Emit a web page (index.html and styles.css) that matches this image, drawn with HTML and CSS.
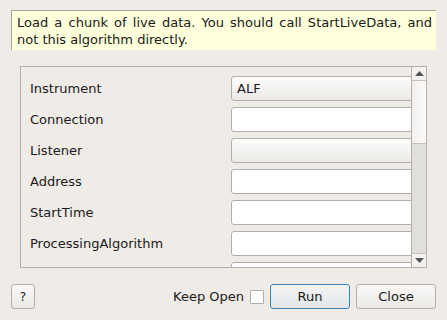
FILE: index.html
```html
<!DOCTYPE html>
<html lang="en">
<head>
  <meta charset="UTF-8">
  <title>StartLiveData</title>
  <link rel="stylesheet" href="styles.css">
</head>
<body>

  <div class="desc">Load a chunk of live data. You should call StartLiveData, and not this algorithm directly.</div>

  <div class="scroll">
    <div class="props">
      <div class="row"><span class="lbl">Instrument</span><div class="combo">ALF</div></div>
      <div class="row"><span class="lbl">Connection</span><div class="field"></div></div>
      <div class="row"><span class="lbl">Listener</span><div class="combo"></div></div>
      <div class="row"><span class="lbl">Address</span><div class="field"></div></div>
      <div class="row"><span class="lbl">StartTime</span><div class="field"></div></div>
      <div class="row"><span class="lbl">ProcessingAlgorithm</span><div class="field"></div></div>
      <div class="row"><span class="lbl"></span><div class="field"></div></div>
    </div>
    <div class="sbar">
      <div class="arrow up"><svg width="9" height="5" viewBox="0 0 9 5"><path d="M0 5 L4.5 0 L9 5 Z" fill="#555"/></svg></div>
      <div class="track"><div class="handle"></div></div>
      <div class="arrow down"><svg width="9" height="5" viewBox="0 0 9 5"><path d="M0 0 L9 0 L4.5 5 Z" fill="#555"/></svg></div>
    </div>
  </div>

  <div class="footer">
    <button class="btn help">?</button>
    <span class="spacer"></span>
    <label class="keep">Keep Open <span class="check"></span></label>
    <button class="btn run">Run</button>
    <button class="btn close">Close</button>
  </div>

</body>
</html>
```

FILE: styles.css
```css
body { margin: 0; background: #efebe7; font-family: "DejaVu Sans", sans-serif; font-size: 13px; color: #1a1a1a; }
.desc { margin: 10px 11px 0 11px; height: 40px; box-sizing: border-box; padding: 3px 4px 0 5px; line-height: 17px; text-align: justify; background: #ffffdc; border-top: 1px solid #a7a49f; border-left: 1px solid #a7a49f; }
.scroll { margin: 16px 0 0 20px; width: 407px; height: 202px; box-sizing: border-box; border: 1px solid #b4b0ab; display: flex; overflow: hidden; }
.props { flex: 1; overflow: hidden; padding: 9px 0 0 9px; }
.row { display: flex; align-items: center; height: 25px; margin-bottom: 6px; }
.lbl { width: 201px; flex-shrink: 0; }
.field, .combo { width: 220px; flex-shrink: 0; height: 25px; box-sizing: border-box; border: 1px solid #b2aea9; border-radius: 3px; background: #fff; padding: 4px 5px; }
.combo { background: linear-gradient(#fcfcfb, #eceae7); }
.sbar { width: 14px; flex-shrink: 0; display: flex; flex-direction: column; border-left: 1px solid #b4b0ab; }
.arrow { height: 13px; display: flex; align-items: center; justify-content: center; background: #f4f2f0; }
.arrow.up { border-bottom: 1px solid #c4c0bb; }
.arrow.down { border-top: 1px solid #c4c0bb; }
.track { flex: 1; background: #e1dfdb; }
.handle { height: 62px; background: linear-gradient(90deg, #f2f0ee, #fbfaf9); border-bottom: 1px solid #c4c0bb; }
.footer { display: flex; align-items: center; margin: 16px 11px 0 11px; }
.spacer { flex: 1; }
.btn { height: 25px; box-sizing: border-box; border: 1px solid #b2aea9; border-radius: 3px; background: linear-gradient(#f9f8f7, #ebe9e6); font-family: "DejaVu Sans", sans-serif; font-size: 13px; color: #1a1a1a; padding: 0; }
.help { width: 24px; font-size: 12px; }
.keep { display: flex; align-items: center; margin-right: 6px; }
.check { width: 14px; height: 14px; box-sizing: border-box; border: 1px solid #b2aea9; background: #fff; margin-left: 6px; border-radius: 1px; }
.run { width: 80px; border-color: #3b84b5; margin-right: 6px; background: linear-gradient(#f3f4f5, #e3e6e8); }
.close { width: 80px; }
```
